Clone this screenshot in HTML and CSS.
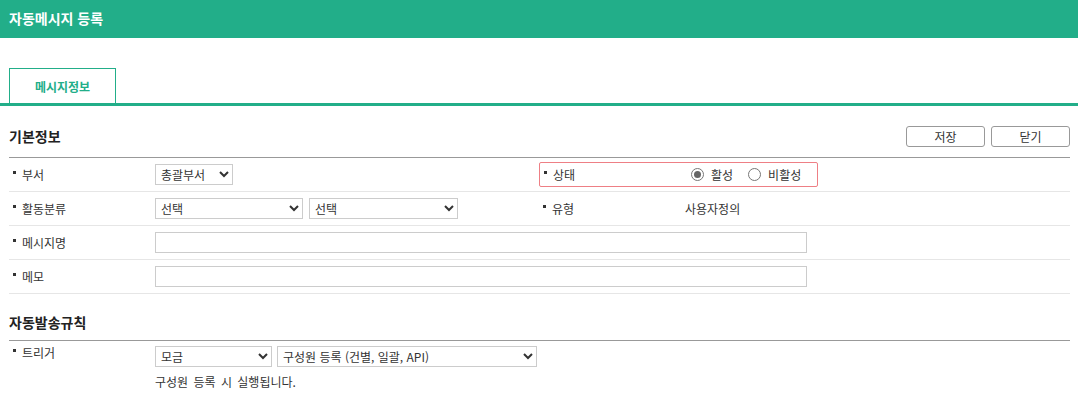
FILE: index.html
```html
<!DOCTYPE html>
<html lang="ko">
<head>
    <meta charset="UTF-8">
    <meta name="viewport" content="width=device-width, initial-scale=1.0">
    <title>자동메시지 등록</title>
    <link rel="stylesheet" href="styles.css">
</head>
<body>
    <header class="page-header">자동메시지 등록</header>

    <div class="tabs">
        <div class="tab active">메시지정보</div>
    </div>

    <div class="content">
        <div class="section-head">
            <h2>기본정보</h2>
            <div class="actions">
                <button type="button">저장</button>
                <button type="button">닫기</button>
            </div>
        </div>

        <div class="form-row">
            <div class="label">부서</div>
            <div class="value">
                <select class="w-dept"><option>총괄부서</option></select>
            </div>
            <div class="status-box">
                <div class="label">상태</div>
                <div class="value radios">
                    <span class="radio checked"></span><span class="radio-text">활성</span>
                    <span class="radio"></span><span class="radio-text">비활성</span>
                </div>
            </div>
        </div>

        <div class="form-row">
            <div class="label">활동분류</div>
            <div class="value">
                <select class="w-cat"><option>선택</option></select>
                <select class="w-cat"><option>선택</option></select>
            </div>
            <div class="label">유형</div>
            <div class="value">사용자정의</div>
        </div>

        <div class="form-row">
            <div class="label">메시지명</div>
            <div class="value wide"><input type="text" class="w-text"></div>
        </div>

        <div class="form-row">
            <div class="label">메모</div>
            <div class="value wide"><input type="text" class="w-text"></div>
        </div>

        <div class="section-head second">
            <h2>자동발송규칙</h2>
        </div>

        <div class="form-row top">
            <div class="label">트리거</div>
            <div class="value wide">
                <div class="selects">
                    <select class="w-trigger"><option>모금</option></select>
                    <select class="w-event"><option>구성원 등록 (건별, 일괄, API)</option></select>
                </div>
                <p class="help">구성원 등록 시 실행됩니다.</p>
            </div>
        </div>
    </div>
</body>
</html>
```

FILE: styles.css
```css
body {
    margin: 0;
    font-family: "Noto Sans CJK KR", "Noto Sans", sans-serif;
    font-size: 12px;
    color: #333;
    background-color: white;
}
.page-header {
    height: 38px;
    line-height: 36px;
    padding-left: 9px;
    background-color: #22ae89;
    color: white;
    font-size: 14px;
    font-weight: bold;
}
.tabs {
    display: flex;
    margin-top: 30px;
    padding-left: 9px;
    border-bottom: 3px solid #22ae89;
}
.tab {
    width: 105px;
    height: 34px;
    line-height: 36px;
    text-align: center;
    border: 1px solid #22ae89;
    border-bottom: none;
    color: #22ae89;
    font-weight: bold;
}
.content {
    padding: 0 8px 0 9px;
}
.section-head {
    display: flex;
    justify-content: space-between;
    align-items: flex-end;
    height: 41px;
    padding-bottom: 10px;
    border-bottom: 1px solid #999;
}
.section-head.second {
    height: 39px;
    padding-bottom: 7px;
}
h2 {
    margin: 0;
    font-size: 14px;
    line-height: 21px;
    color: #222;
}
.actions {
    display: flex;
    gap: 6px;
}
button {
    width: 79px;
    height: 21px;
    padding: 0;
    background-color: white;
    border: 1px solid #999;
    border-radius: 3px;
    font-family: inherit;
    font-size: 12px;
    color: #333;
    cursor: pointer;
}
.form-row {
    display: grid;
    grid-template-columns: 146px 384px 146px 1fr;
    align-items: center;
    height: 33px;
    border-bottom: 1px solid #e6e6e6;
}
.form-row.top {
    align-items: start;
    height: auto;
    border-bottom: none;
}
.label {
    padding-left: 4px;
    line-height: 20px;
}
.label::before {
    content: "";
    display: inline-block;
    width: 3px;
    height: 3px;
    margin-right: 6px;
    vertical-align: 6px;
    background-color: #333;
}
.form-row.top .label {
    padding-top: 2px;
}
.value {
    display: flex;
    align-items: center;
    gap: 6px;
}
.value.wide {
    grid-column: 2 / 5;
}
.form-row.top .value {
    display: block;
    padding-top: 5px;
}
select {
    height: 21px;
    padding: 0 1px;
    border: 1px solid #ccc;
    border-radius: 0;
    background-color: white;
    font-family: inherit;
    font-size: 12px;
    color: #333;
}
.w-dept { width: 78px; }
.w-cat { width: 148px; }
.w-cat + .w-cat { width: 149px; }
.w-trigger { width: 117px; }
.w-event { width: 260px; }
.selects {
    display: flex;
    gap: 5px;
}
input.w-text {
    width: 652px;
    height: 21px;
    box-sizing: border-box;
    border: 1px solid #ccc;
    font-family: inherit;
    font-size: 12px;
}
.help {
    margin: 6px 0 0;
    line-height: 18px;
    word-spacing: 2px;
}
.status-box {
    grid-column: 3 / 5;
    display: grid;
    grid-template-columns: 145px 1fr;
    align-items: center;
    width: 277px;
    height: 23px;
    border: 1px solid #ee7f85;
    border-radius: 2px;
}
.radios {
    gap: 0;
}
.radio {
    width: 11px;
    height: 11px;
    margin-left: 6px;
    margin-right: 7px;
    border: 1px solid #777;
    border-radius: 50%;
    position: relative;
    background-color: white;
}
.radio.checked::after {
    content: "";
    position: absolute;
    left: 2px;
    top: 2px;
    width: 7px;
    height: 7px;
    border-radius: 50%;
    background-color: #666;
}
.radio-text + .radio {
    margin-left: 15px;
}
```
